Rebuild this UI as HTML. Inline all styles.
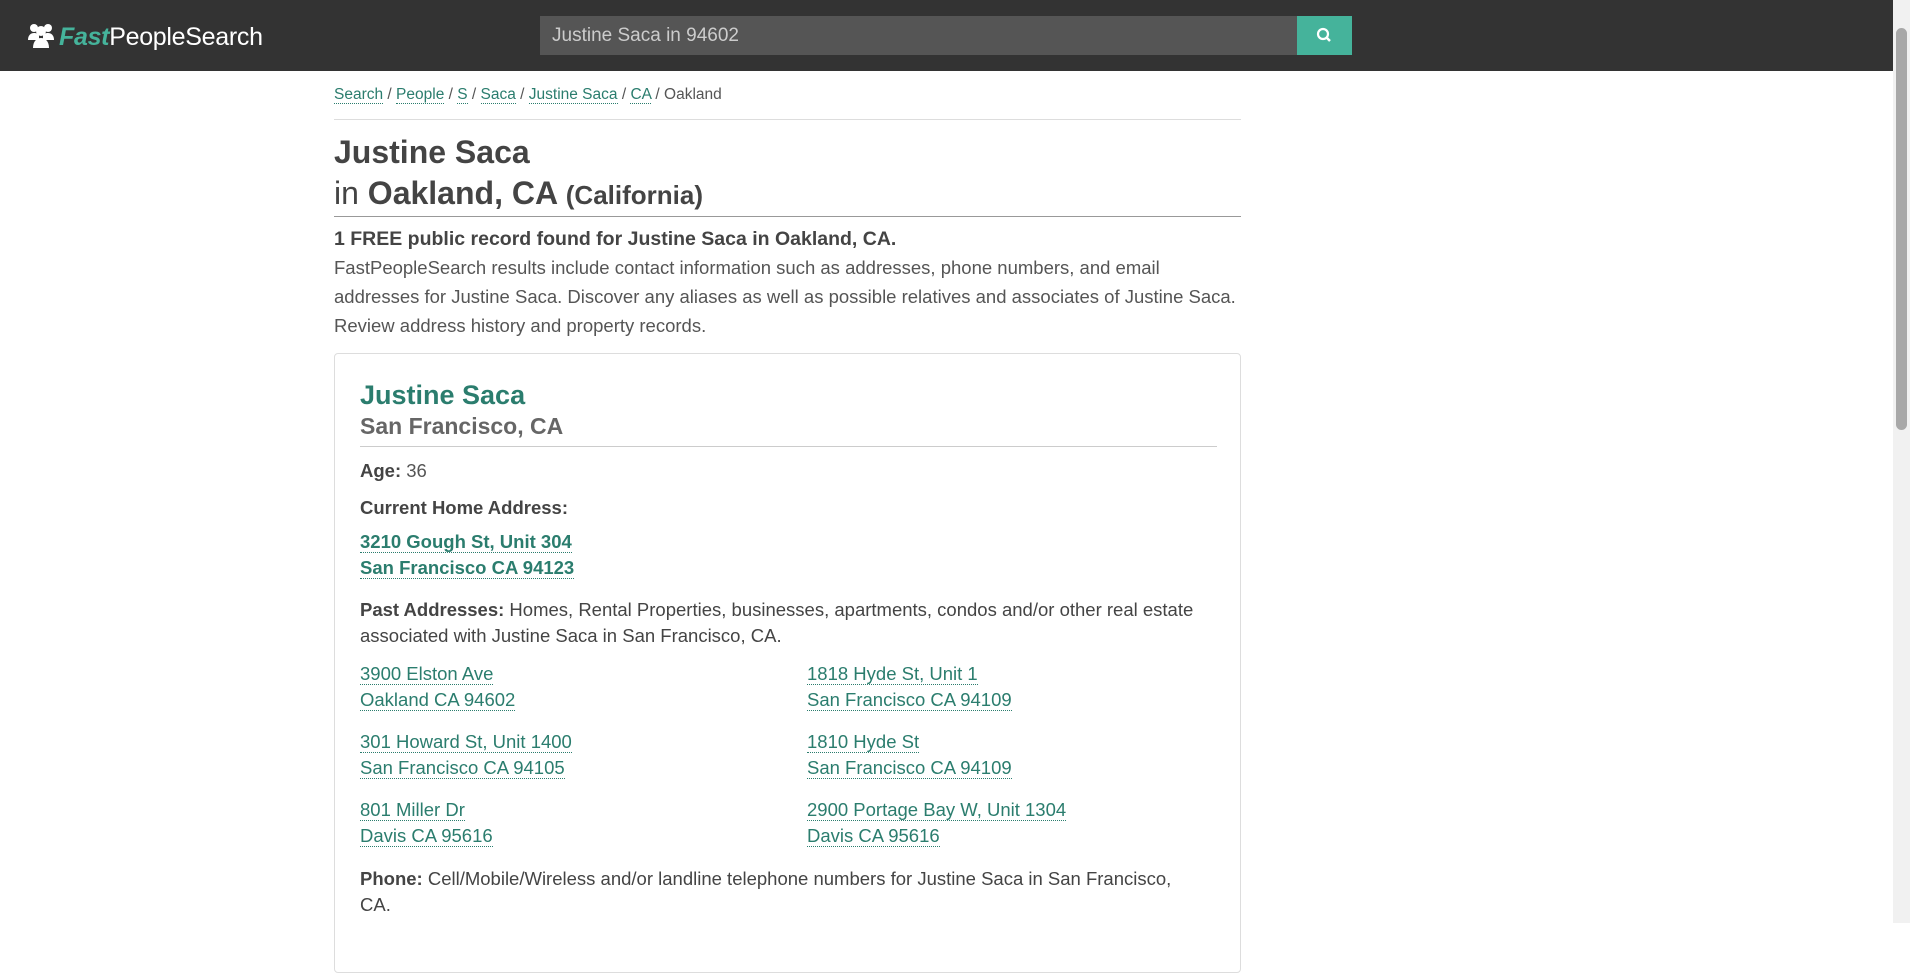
<!DOCTYPE html>
<html><head><meta charset="utf-8"><style>
body{margin:0;width:1910px;height:923px;overflow:hidden;background:#fff;font-family:"Liberation Sans",Arial,sans-serif;color:#444;position:relative}
.hdr{position:absolute;left:0;top:0;width:1893px;height:71px;background:#333}
.logo{position:absolute;left:27px;top:22px;font-size:25px;color:#fff;letter-spacing:-0.3px}
.logo b{color:#45b39b;font-style:italic}
.inp{position:absolute;left:540px;top:16px;width:757px;height:39px;background:#555;color:#ccc;font-size:19px;line-height:39px;box-sizing:border-box;padding-left:12px}
.btn{position:absolute;left:1297px;top:16px;width:55px;height:39px;background:#45b39b}
.sb{position:absolute;left:1893px;top:0;width:17px;height:923px;background:#f1f1f1}
.th{position:absolute;left:1896px;top:28px;width:11px;height:402px;background:#a8a8a8;border-radius:6px}
.c{position:absolute;left:334px;width:907px}
a{color:#2b7d6e;text-decoration:none;border-bottom:1px dotted #2b7d6e}
.bc{top:86px;font-size:15.5px;color:#555}
.line{position:absolute;left:334px;width:907px;height:1px;background:#ddd}
.h1{top:132px;font-size:32px;font-weight:bold;line-height:41px;color:#444}
.p{font-size:18.5px;line-height:29px;color:#555}
.card{position:absolute;left:334px;top:353px;width:907px;height:620px;border:1px solid #ddd;border-radius:4px;box-sizing:border-box}
.ci{position:absolute;left:360px;font-size:18.5px;color:#444}
</style></head><body>
<div class="hdr">
<div class="logo"><svg width="28" height="26" viewBox="0 0 28 26" style="vertical-align:-3px;margin-right:4px"><g fill="#fff"><circle cx="7" cy="6" r="4"/><circle cx="21" cy="6" r="4"/><circle cx="14" cy="9" r="5"/><path d="M1 18c0-5 3-7 6-7s5 1 5 3v4z"/><path d="M27 18c0-5-3-7-6-7s-5 1-5 3v4z"/><path d="M6 26c0-7 4-10 8-10s8 3 8 10z"/></g></svg><b>Fast</b>PeopleSearch</div>
<div class="inp">Justine Saca in 94602</div>
<div class="btn"><svg width="55" height="39"><circle cx="26" cy="18" r="5" stroke="#fff" stroke-width="2.2" fill="none"/><line x1="30" y1="22" x2="33" y2="25" stroke="#fff" stroke-width="2.5"/></svg></div>
</div>
<div class="sb"></div><div class="th"></div>
<div class="c bc"><a>Search</a> / <a>People</a> / <a>S</a> / <a>Saca</a> / <a>Justine Saca</a> / <a>CA</a> / Oakland</div>
<div class="line" style="top:119px"></div>
<div class="c h1">Justine Saca<br><span style="font-weight:normal">in </span>Oakland, CA <span style="font-size:26px">(California)</span></div>
<div class="line" style="top:216px;background:#999"></div>
<div class="c" style="top:228px;font-size:19.5px;font-weight:bold;color:#444">1 FREE public record found for Justine Saca in Oakland, CA.</div>
<div class="c p" style="top:253px">FastPeopleSearch results include contact information such as addresses, phone numbers, and email addresses for Justine Saca. Discover any aliases as well as possible relatives and associates of Justine Saca. Review address history and property records.</div>
<div class="card"></div>
<div class="ci" style="top:380px;font-size:27px;font-weight:bold;color:#2b7d6e">Justine Saca</div>
<div class="ci" style="top:413px;font-size:23px;font-weight:bold;color:#666">San Francisco, CA</div>
<div class="line" style="left:360px;width:857px;top:446px;background:#ccc"></div>
<div class="ci" style="top:460px"><b>Age:</b> <span style="color:#555">36</span></div>
<div class="ci" style="top:497px;font-weight:bold">Current Home Address:</div>
<div class="ci" style="top:529px;font-weight:bold;line-height:25.5px"><a>3210 Gough St, Unit 304</a><br><a>San Francisco CA 94123</a></div>
<div class="ci" style="top:597px;width:860px;line-height:25.5px"><b>Past Addresses:</b> Homes, Rental Properties, businesses, apartments, condos and/or other real estate associated with Justine Saca in San Francisco, CA.</div>
<div class="ci" style="top:661px;line-height:25.5px"><a>3900 Elston Ave</a><br><a>Oakland CA 94602</a></div>
<div class="ci" style="top:729px;line-height:25.5px"><a>301 Howard St, Unit 1400</a><br><a>San Francisco CA 94105</a></div>
<div class="ci" style="top:797px;line-height:25.5px"><a>801 Miller Dr</a><br><a>Davis CA 95616</a></div>
<div class="ci" style="left:807px;top:661px;line-height:25.5px"><a>1818 Hyde St, Unit 1</a><br><a>San Francisco CA 94109</a></div>
<div class="ci" style="left:807px;top:729px;line-height:25.5px"><a>1810 Hyde St</a><br><a>San Francisco CA 94109</a></div>
<div class="ci" style="left:807px;top:797px;line-height:25.5px"><a>2900 Portage Bay W, Unit 1304</a><br><a>Davis CA 95616</a></div>
<div class="ci" style="top:866px;width:830px;line-height:25.5px"><b>Phone:</b> Cell/Mobile/Wireless and/or landline telephone numbers for Justine Saca in San Francisco, CA.</div>
</body></html>
